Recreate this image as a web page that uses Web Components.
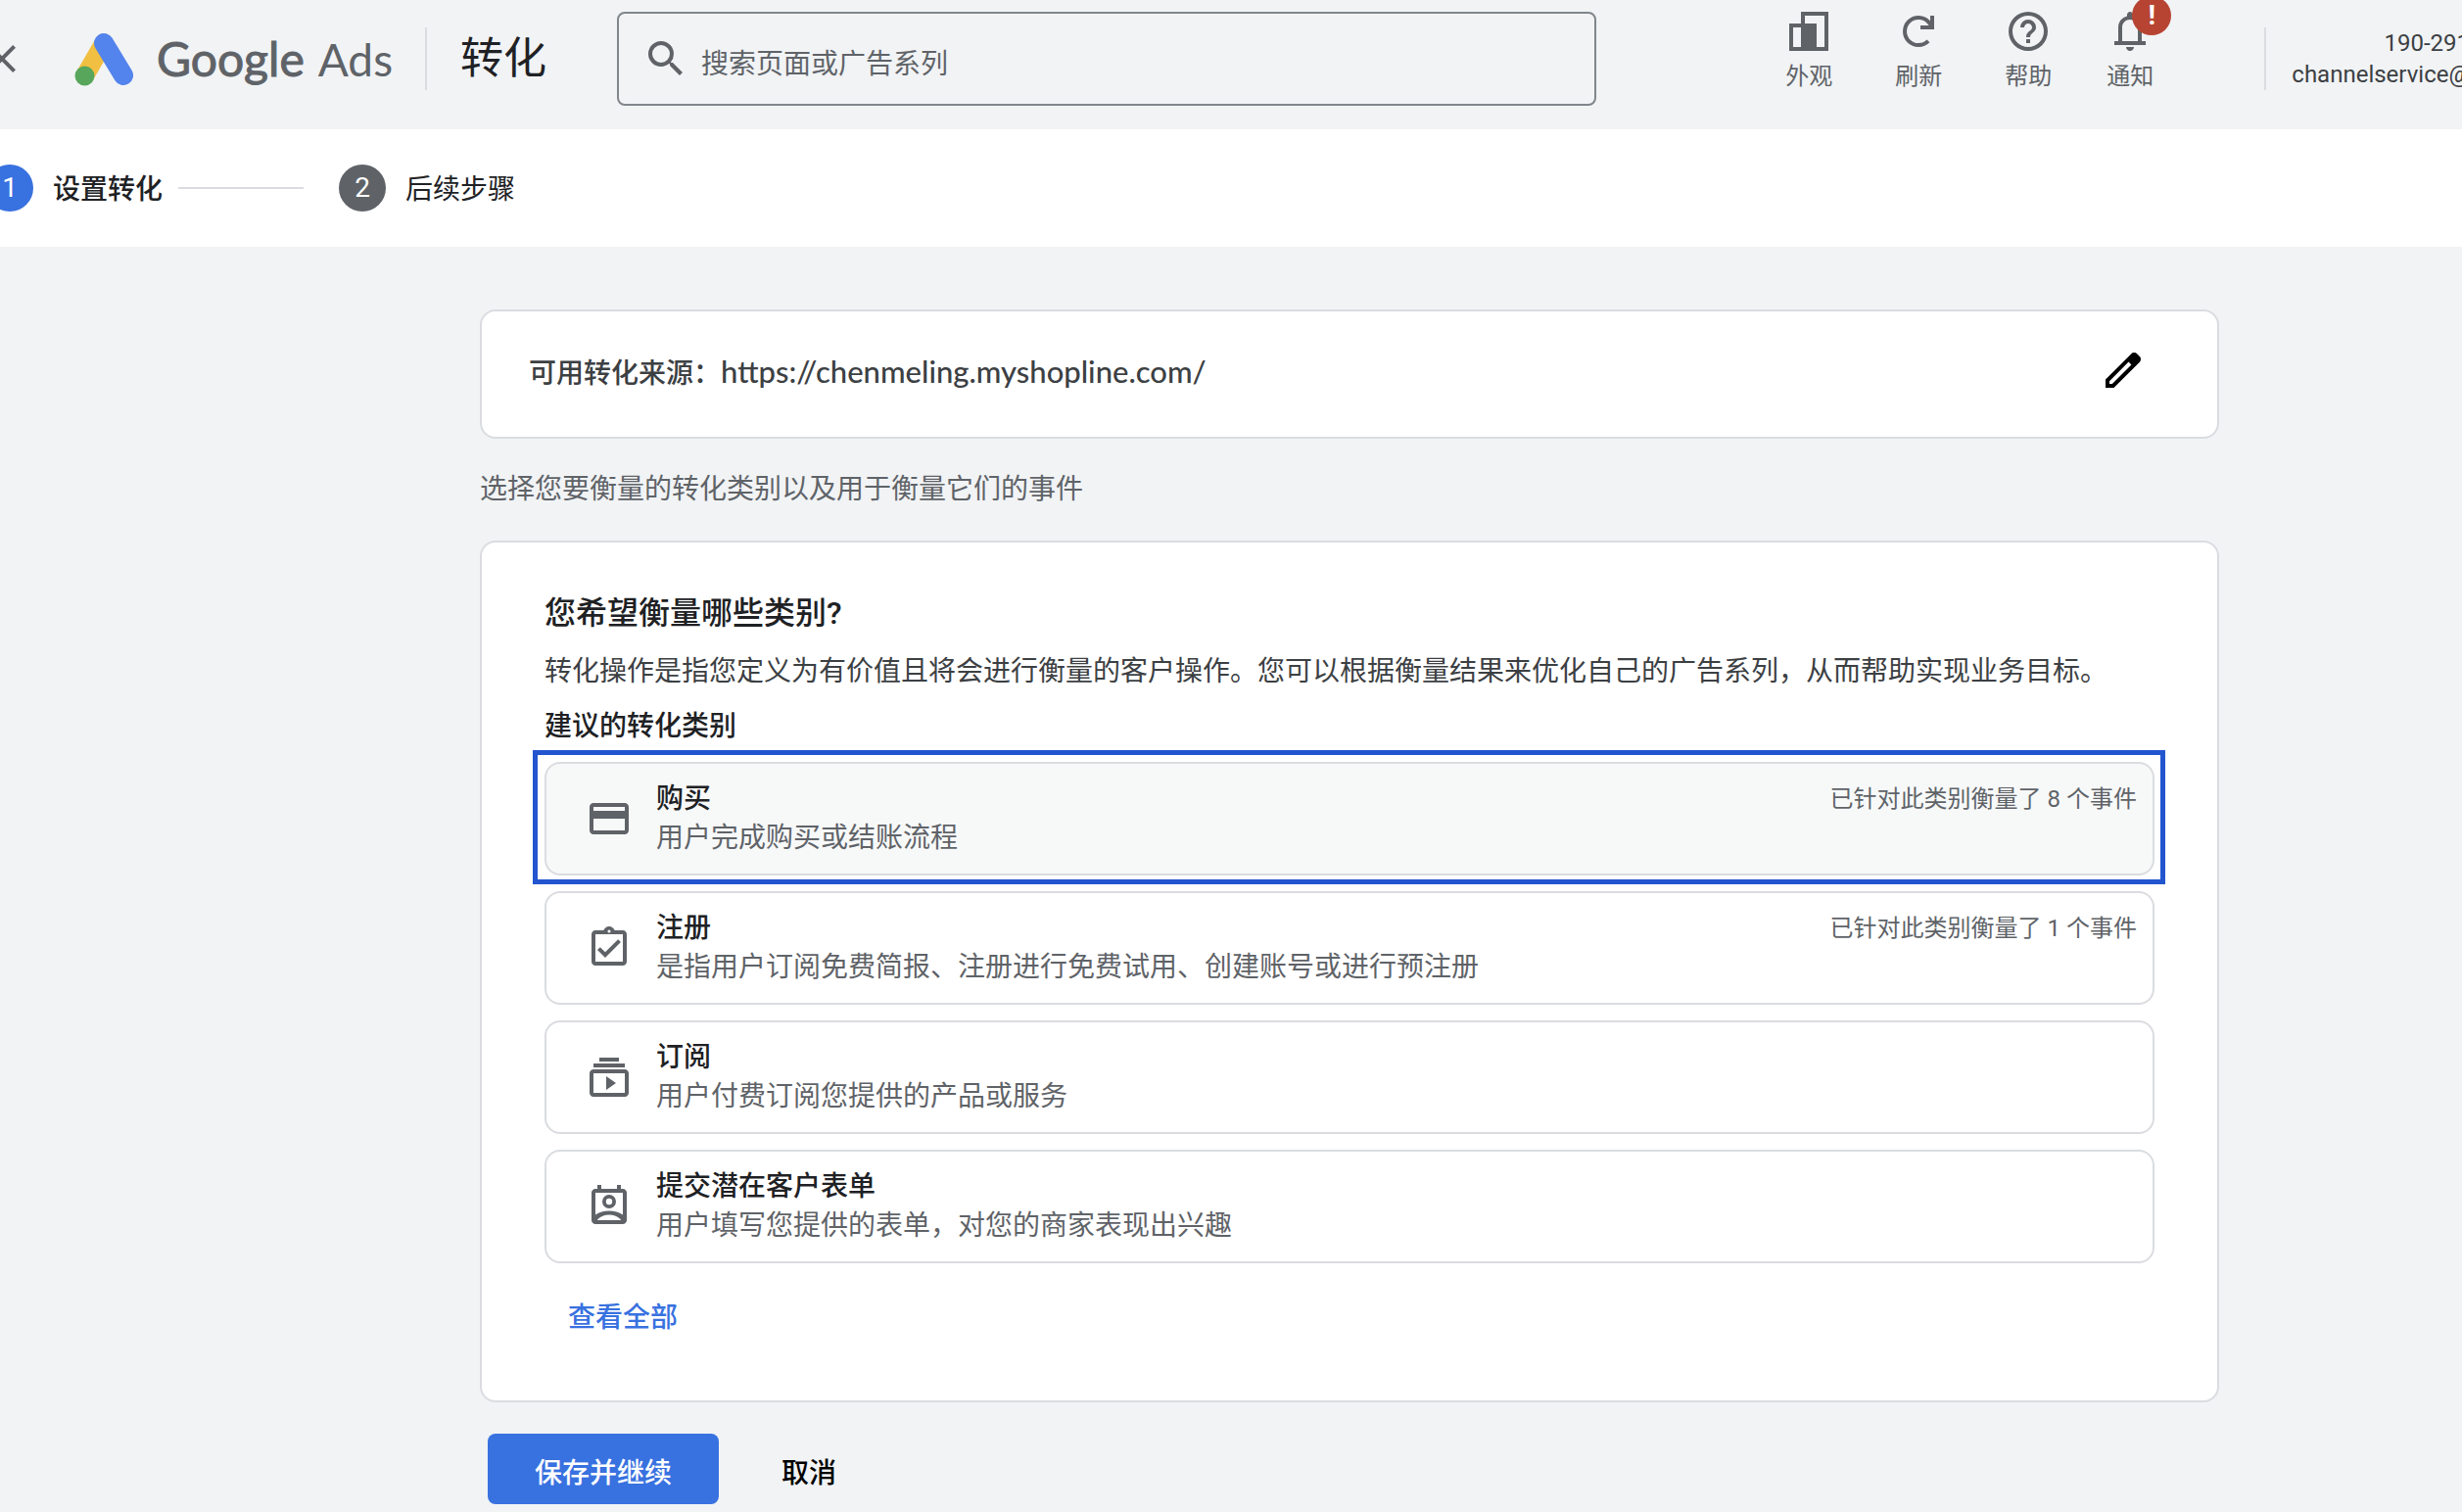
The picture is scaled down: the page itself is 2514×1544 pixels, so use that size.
<!DOCTYPE html>
<html lang="zh-CN">
<head>
<meta charset="utf-8">
<meta name="viewport" content="width=device-width, initial-scale=1">
<title>转化 - Google Ads</title>
<style>
  :root {
    --blue: #3871e0;
    --grey-300: #dadce0;
    --grey-700: #5f6368;
    --grey-800: #3c4043;
    --grey-900: #202124;
  }

  body {
    margin: 0;
    background: #f1f3f5;
    color: var(--grey-900);
    font-family: Roboto, "Noto Sans CJK SC", sans-serif;
    font-size: 28px;
    line-height: 40px;
    overflow-x: hidden;
  }
</style>
</head>
<body>
<ads-app></ads-app>

<script>
// Icon paths, all on a 24 unit grid
const ICONS = {
  close: `<path d="M19 6.41 17.59 5 12 10.59 6.41 5 5 6.41 10.59 12 5 17.59 6.41 19 12 13.41 17.59 19 19 17.59 13.41 12z"/>`,
  search: `<path d="M15.5 14h-.79l-.28-.27A6.47 6.47 0 0 0 16 9.5 6.5 6.5 0 1 0 9.5 16c1.61 0 3.09-.59 4.23-1.57l.27.28v.79l5 4.99L20.49 19zm-6 0a4.5 4.5 0 1 1 0-9 4.5 4.5 0 0 1 0 9z"/>`,
  appearance: `<path fill-rule="evenodd" d="M8 2h14v20H2V8h6zM10 4v4h6v12h4V4zM4 10v10h4V10z"/>`,
  refresh: `<path d="M17 16.9A7 7 0 1 1 17.2 7.3L19 9.6" fill="none" stroke="currentColor" stroke-width="2"/><path d="M18 4h2v7h-7V9h5z"/>`,
  help: `<path d="M11 18h2v-2h-2zm1-16a10 10 0 1 0 0 20 10 10 0 0 0 0-20zm0 18a8 8 0 1 1 0-16 8 8 0 0 1 0 16zm0-14a4 4 0 0 0-4 4h2c0-1.1.9-2 2-2s2 .9 2 2c0 2-3 1.75-3 5h2c0-2.25 3-2.5 3-5a4 4 0 0 0-4-4z"/>`,
  bell: `<path d="M4 19v-2h2v-7c0-1.38.42-2.6 1.25-3.69.83-1.08 1.92-1.79 3.25-2.11V3.5c0-.42.15-.77.44-1.06S11.58 2 12 2s.77.15 1.06.44.44.64.44 1.06v.7c1.33.33 2.42 1.03 3.25 2.11S18 8.62 18 10v7h2v2zm8 3c-.55 0-1.02-.2-1.41-.59S10 20.55 10 20h4c0 .55-.2 1.02-.59 1.41S12.55 22 12 22zm-4-5h8v-7c0-1.1-.39-2.04-1.17-2.82S13.1 6 12 6s-2.04.39-2.82 1.18S8 8.9 8 10z"/>`,
  edit: `<path d="M5 19h1.425L16.2 9.225 14.775 7.8 5 17.575zm-2 2v-4.25L16.2 3.575q.3-.275.662-.425t.763-.15.775.15.65.45L20.425 5q.3.275.437.65T21 6.4q0 .4-.137.763t-.438.662L7.25 21z"/>`,
  card: `<path d="M20 4H4c-1.11 0-2 .89-2 2v12c0 1.11.89 2 2 2h16c1.11 0 2-.89 2-2V6c0-1.11-.89-2-2-2zm0 14H4v-6h16zm0-10H4V6h16z"/>`,
  signup: `<path d="M19 3h-4.18C14.4 1.84 13.3 1 12 1s-2.4.84-2.82 2H5c-1.1 0-2 .9-2 2v14c0 1.1.9 2 2 2h14c1.1 0 2-.9 2-2V5c0-1.1-.9-2-2-2zm-7-.25a.75.75 0 1 1 0 1.5.75.75 0 0 1 0-1.5zM19 19H5V5h14z"/><path d="M17.99 9l-1.41-1.42-6.59 6.59-2.58-2.57-1.42 1.41 4 3.99z"/>`,
  subscribe: `<path d="M7 2h10v2H7zM4 5h16v2H4zM20 8H4c-1.1 0-2 .9-2 2v10c0 1.1.9 2 2 2h16c1.1 0 2-.9 2-2V10c0-1.1-.9-2-2-2zm0 12H4V10h16zM10.5 11.5v7l5-3.5z"/>`,
  lead: `<path fill-rule="evenodd" d="M6 1h2v2h8V1h2v2h1c1.1 0 2 .9 2 2v14c0 1.1-.9 2-2 2H5c-1.1 0-2-.9-2-2V5c0-1.1.9-2 2-2h1zM5 5v11.3c1.9-1.4 4.3-2.1 7-2.1s5.1.7 7 2.1V5zM6 19h12v-.3c-1.6-1.6-3.6-2.5-6-2.5s-4.4.9-6 2.5z"/><path fill-rule="evenodd" d="M12 6a3.5 3.5 0 1 1 0 7 3.5 3.5 0 0 1 0-7zm0 1.9a1.6 1.6 0 1 0 0 3.2 1.6 1.6 0 0 0 0-3.2z"/>`
};

// Reset shared by every component that holds a button
const BUTTON_RESET = `
  button {
    margin: 0;
    padding: 0;
    border: 0;
    background: none;
    color: inherit;
    font: inherit;
    text-align: inherit;
    cursor: pointer;
  }
`;

class AdsIcon extends HTMLElement {
  constructor() {
    super();
    this.attachShadow({ mode: "open" });
  }

  connectedCallback() {
    this.shadowRoot.innerHTML = `
      <style>
        :host { display: block; flex: none; width: 48px; height: 48px; }
        svg { display: block; width: 100%; height: 100%; fill: currentColor; }
      </style>
      <svg viewBox="0 0 24 24" aria-hidden="true">${ICONS[this.getAttribute("name")] || ""}</svg>
    `;
  }
}

class AdsLogo extends HTMLElement {
  constructor() {
    super();
    this.attachShadow({ mode: "open" }).innerHTML = `
      <style>
        :host { display: flex; align-items: center; gap: 24px; flex: none; color: var(--grey-700); }
        svg { display: block; width: 60px; height: 56px; }
        .name {
          display: flex;
          align-items: baseline;
          gap: 14px;
          font-family: Lato, sans-serif;
          font-size: 46px;
          line-height: 56px;
        }
        .google { font-size: 48px; -webkit-text-stroke: 1px currentColor; }
      </style>
      <svg viewBox="0 0 60 56" aria-hidden="true" fill="none" stroke-linecap="round">
        <path d="M10.5 45.5 30 12" stroke="#f1bf42" stroke-width="19"/>
        <path d="M30 12 50 45" stroke="#5383ec" stroke-width="20"/>
        <circle cx="10.5" cy="45.5" r="10" fill="#58a65c"/>
      </svg>
      <div class="name"><span class="google">Google</span><span>Ads</span></div>
    `;
  }
}

class AdsSearch extends HTMLElement {
  constructor() {
    super();
    this.attachShadow({ mode: "open" }).innerHTML = `
      <style>
        :host { display: block; }
        label {
          display: flex;
          align-items: center;
          gap: 12px;
          box-sizing: border-box;
          height: 96px;
          padding: 0 24px;
          border: 2px solid #80868b;
          border-radius: 8px;
          color: var(--grey-700);
        }
        input {
          flex: 1;
          min-width: 0;
          padding: 12px 0 0;
          border: 0;
          outline: 0;
          background: none;
          color: var(--grey-900);
          font: inherit;
        }
        input::placeholder { color: var(--grey-700); opacity: 1; }
      </style>
      <label>
        <ads-icon name="search"></ads-icon>
        <input type="search" placeholder="搜索页面或广告系列" aria-label="搜索">
      </label>
    `;
  }
}

class HeaderAction extends HTMLElement {
  constructor() {
    super();
    this.attachShadow({ mode: "open" });
  }

  connectedCallback() {
    this.shadowRoot.innerHTML = `
      <style>
        ${BUTTON_RESET}
        :host { display: block; color: var(--grey-700); font-size: 24px; line-height: 32px; }
        button {
          position: relative;
          display: flex;
          flex-direction: column;
          align-items: center;
          gap: 6px;
          white-space: nowrap;
        }
        .badge {
          position: absolute;
          top: -12px;
          right: -18px;
          width: 40px;
          height: 40px;
          border-radius: 50%;
          background: #b74432;
          color: #fff;
          font-size: 28px;
          font-weight: 700;
          line-height: 40px;
          text-align: center;
        }
      </style>
      <button type="button">
        <ads-icon name="${this.getAttribute("icon")}"></ads-icon>
        <slot></slot>
        ${this.hasAttribute("badge") ? `<span class="badge">${this.getAttribute("badge")}</span>` : ""}
      </button>
    `;
  }
}

class AdsHeader extends HTMLElement {
  constructor() {
    super();
    this.attachShadow({ mode: "open" }).innerHTML = `
      <style>
        ${BUTTON_RESET}
        :host {
          display: flex;
          align-items: center;
          height: 120px;
          padding-bottom: 12px;
          overflow: hidden;
        }
        .close { margin: 0 50px 0 -22px; color: var(--grey-700); }
        .divider { flex: none; width: 2px; height: 64px; background: var(--grey-300); }
        ads-logo { width: 358px; }
        h1 {
          flex: none;
          margin: 0 72px 0 34px;
          font-size: 44px;
          font-weight: 400;
          line-height: 56px;
        }
        ads-search { flex: 0 1 1000px; min-width: 240px; }
        .actions {
          display: flex;
          align-self: flex-start;
          gap: 64px;
          margin: 8px 113px 0 auto;
        }
        .actions header-action:last-child { margin-left: -8px; }
        /* the account block runs a little past the right edge */
        .account {
          flex: none;
          margin: 0 -8px 0 26px;
          color: var(--grey-800);
          font-size: 24px;
          line-height: 32px;
          text-align: right;
        }
      </style>
      <button class="close" type="button" aria-label="关闭"><ads-icon name="close"></ads-icon></button>
      <ads-logo></ads-logo>
      <div class="divider"></div>
      <h1>转化</h1>
      <ads-search></ads-search>
      <div class="actions">
        <header-action icon="appearance">外观</header-action>
        <header-action icon="refresh">刷新</header-action>
        <header-action icon="help">帮助</header-action>
        <header-action icon="bell" badge="!">通知</header-action>
      </div>
      <div class="divider"></div>
      <div class="account">
        <div>190-291</div>
        <div>channelservice@</div>
      </div>
    `;
  }
}

class StepItem extends HTMLElement {
  constructor() {
    super();
    this.attachShadow({ mode: "open" });
  }

  connectedCallback() {
    this.shadowRoot.innerHTML = `
      <style>
        :host { display: flex; align-items: center; gap: 20px; }
        :host([active]) { font-weight: 500; }
        .number {
          width: 48px;
          height: 48px;
          border-radius: 50%;
          background: var(--grey-700);
          color: #fff;
          font-weight: 400;
          line-height: 48px;
          text-align: center;
        }
        .label { padding-top: 4px; }
        :host([active]) .number { background: var(--blue); }
      </style>
      <span class="number">${this.getAttribute("number")}</span>
      <span class="label"><slot></slot></span>
    `;
  }
}

class StepBar extends HTMLElement {
  constructor() {
    super();
    this.attachShadow({ mode: "open" }).innerHTML = `
      <style>
        :host {
          display: flex;
          align-items: center;
          height: 120px;
          background: #fff;
        }
        step-item:first-of-type { margin-left: -14px; }
        .line { width: 128px; height: 2px; margin: 0 36px 0 16px; background: var(--grey-300); }
      </style>
      <step-item number="1" active>设置转化</step-item>
      <div class="line"></div>
      <step-item number="2">后续步骤</step-item>
    `;
  }
}

class AdsCard extends HTMLElement {
  constructor() {
    super();
    this.attachShadow({ mode: "open" }).innerHTML = `
      <style>
        :host {
          display: block;
          border: 2px solid var(--grey-300);
          border-radius: 16px;
          background: #fff;
        }
      </style>
      <slot></slot>
    `;
  }
}

class SourceBar extends HTMLElement {
  constructor() {
    super();
    this.attachShadow({ mode: "open" });
  }

  connectedCallback() {
    this.shadowRoot.innerHTML = `
      <style>
        ${BUTTON_RESET}
        :host {
          display: flex;
          justify-content: space-between;
          padding: 36px 72px 36px 48px;
          color: var(--grey-800);
          font-weight: 500;
          line-height: 56px;
        }
        button { height: 48px; color: #000; }
        .url { font-family: Lato, sans-serif; font-size: 31px; line-height: 40px; }
      </style>
      <div>可用转化来源：<span class="url">${this.getAttribute("url")}</span></div>
      <button type="button" aria-label="修改"><ads-icon name="edit"></ads-icon></button>
    `;
  }
}

class CategoryRow extends HTMLElement {
  constructor() {
    super();
    this.attachShadow({ mode: "open" });
  }

  connectedCallback() {
    const note = this.getAttribute("note");
    this.shadowRoot.innerHTML = `
      <style>
        ${BUTTON_RESET}
        :host { display: block; position: relative; }
        button {
          display: flex;
          align-items: center;
          gap: 24px;
          box-sizing: border-box;
          width: 100%;
          height: 116px;
          padding: 0 16px 0 40px;
          border: 2px solid var(--grey-300);
          border-radius: 16px;
          background: #fff;
          color: var(--grey-700);
        }
        .text { display: flex; flex: 1; flex-direction: column; }
        .title { color: var(--grey-900); font-weight: 500; }
        .note { align-self: flex-start; margin-top: 16px; font-size: 24px; }

        :host([selected]) button { background: #f7f9f9; }
        /* square frame round the picked row, drawn over the gaps */
        :host([selected])::after {
          content: "";
          position: absolute;
          inset: -12px -11px -9px -12px;
          border: 5px solid #2355cf;
          pointer-events: none;
        }
      </style>
      <button type="button">
        <ads-icon name="${this.getAttribute("icon")}"></ads-icon>
        <span class="text">
          <span class="title">${this.getAttribute("name")}</span>
          <slot></slot>
        </span>
        ${note ? `<span class="note">${note}</span>` : ""}
      </button>
    `;
  }
}

class CategoryPicker extends HTMLElement {
  constructor() {
    super();
    this.attachShadow({ mode: "open" }).innerHTML = `
      <style>
        :host {
          display: flex;
          flex-direction: column;
          gap: 16px;
          padding: 48px 64px 52px;
        }
        h2, h3, p { margin: 0; }
        h2 { font-size: 32px; font-weight: 500; line-height: 48px; }
        h3 { font-size: 28px; font-weight: 500; }
        p { color: var(--grey-800); }
        a {
          align-self: flex-start;
          padding: 20px 24px 12px;
          color: var(--blue);
          font-weight: 500;
          text-decoration: none;
        }
      </style>
      <h2>您希望衡量哪些类别?</h2>
      <p>转化操作是指您定义为有价值且将会进行衡量的客户操作。您可以根据衡量结果来优化自己的广告系列，从而帮助实现业务目标。</p>
      <h3>建议的转化类别</h3>
      <category-row icon="card" name="购买" note="已针对此类别衡量了 8 个事件" selected>用户完成购买或结账流程</category-row>
      <category-row icon="signup" name="注册" note="已针对此类别衡量了 1 个事件">是指用户订阅免费简报、注册进行免费试用、创建账号或进行预注册</category-row>
      <category-row icon="subscribe" name="订阅">用户付费订阅您提供的产品或服务</category-row>
      <category-row icon="lead" name="提交潜在客户表单">用户填写您提供的表单，对您的商家表现出兴趣</category-row>
      <a href="#all">查看全部</a>
    `;
  }
}

class FormActions extends HTMLElement {
  constructor() {
    super();
    this.attachShadow({ mode: "open" }).innerHTML = `
      <style>
        ${BUTTON_RESET}
        :host { display: flex; gap: 16px; }
        button {
          height: 72px;
          padding: 10px 48px 0;
          border-radius: 8px;
          color: #000;
          font-weight: 500;
        }
        .primary { background: var(--blue); color: #fff; }
      </style>
      <button class="primary" type="button">保存并继续</button>
      <button type="button">取消</button>
    `;
  }
}

class AdsApp extends HTMLElement {
  constructor() {
    super();
    this.attachShadow({ mode: "open" }).innerHTML = `
      <style>
        :host { display: block; }
        main { padding: 64px 248px 8px 490px; }
        p { margin: 32px 0; color: var(--grey-700); }
        form-actions { margin: 32px 0 0 8px; }
      </style>
      <ads-header></ads-header>
      <step-bar></step-bar>
      <main>
        <ads-card><source-bar url="https://chenmeling.myshopline.com/"></source-bar></ads-card>
        <p>选择您要衡量的转化类别以及用于衡量它们的事件</p>
        <ads-card><category-picker></category-picker></ads-card>
        <form-actions></form-actions>
      </main>
    `;
  }
}

customElements.define("ads-icon", AdsIcon);
customElements.define("ads-logo", AdsLogo);
customElements.define("ads-search", AdsSearch);
customElements.define("header-action", HeaderAction);
customElements.define("ads-header", AdsHeader);
customElements.define("step-item", StepItem);
customElements.define("step-bar", StepBar);
customElements.define("ads-card", AdsCard);
customElements.define("source-bar", SourceBar);
customElements.define("category-row", CategoryRow);
customElements.define("category-picker", CategoryPicker);
customElements.define("form-actions", FormActions);
customElements.define("ads-app", AdsApp);
</script>
</body>
</html>
